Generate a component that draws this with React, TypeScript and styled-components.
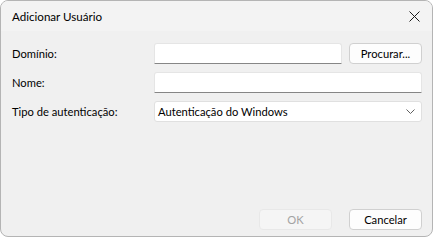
import styled, { createGlobalStyle } from 'styled-components'

const GlobalStyle = createGlobalStyle`
  * {
    box-sizing: border-box;
  }
  body {
    margin: 0;
    background: #ffffff;
    font-family: Lato, 'Noto Sans', sans-serif;
    font-size: 11.2px;
    color: #000000;
  }
`

const Window = styled.div`
  width: 433px;
  height: 237px;
  display: flex;
  flex-direction: column;
  background: #f0f0f0;
  border: 1px solid #b4b4b4;
  border-radius: 8px;
  overflow: hidden;
`

const TitleBar = styled.div`
  height: 30px;
  display: flex;
  align-items: center;
  justify-content: space-between;
  padding: 1px 9px 0 11px;
  background: #f3f3f3;
`

const Title = styled.span`
  font-size: 11.6px;
  color: #000000;
`

const CloseButton = styled.button`
  width: 18px;
  height: 18px;
  padding: 0;
  border: none;
  background: transparent;
  display: flex;
  align-items: center;
  justify-content: center;
`

const Content = styled.div`
  flex: 1;
  display: flex;
  flex-direction: column;
  padding: 12px 10px 6px 11px;
`

const Form = styled.div`
  display: grid;
  grid-template-columns: 135px 188px 73px;
  grid-auto-rows: 21px;
  column-gap: 7px;
  row-gap: 8px;
`

const Label = styled.label`
  display: flex;
  align-items: center;
  height: 21px;
  color: #000000;
`

const TextInput = styled.input<{ $span?: number }>`
  grid-column: span ${(p) => p.$span ?? 1};
  height: 21px;
  margin: 0;
  padding: 0 4px;
  font: inherit;
  background: #ffffff;
  border: 1px solid #e5e5e5;
  border-bottom: 1px solid #868686;
  border-radius: 3px 3px 0 0;
  outline: none;
`

const Select = styled.div`
  grid-column: span 2;
  height: 21px;
  display: flex;
  align-items: center;
  justify-content: space-between;
  padding: 0 6px 0 3px;
  background: #ffffff;
  border: 1px solid #e0e0e0;
  border-radius: 3px;
  color: #000000;
`

const Button = styled.button<{ $disabled?: boolean }>`
  width: 73px;
  height: 21px;
  margin: 0;
  padding: 0;
  font: inherit;
  color: ${(p) => (p.$disabled ? '#a3a3a3' : '#000000')};
  background: ${(p) => (p.$disabled ? '#f5f5f5' : '#fdfdfd')};
  border: 1px solid ${(p) => (p.$disabled ? '#e8e8e8' : '#d0d0d0')};
  border-radius: 4px;
`

const Footer = styled.div`
  margin-top: auto;
  display: flex;
  justify-content: flex-end;
  gap: 17px;
`

export default function App() {
  return (
    <>
      <GlobalStyle />
      <Window>
        <TitleBar>
          <Title>Adicionar Usuário</Title>
          <CloseButton aria-label="Fechar">
            <svg width="11" height="11" viewBox="0 0 11 11">
              <path d="M0.5 0.5 L10.5 10.5 M10.5 0.5 L0.5 10.5" stroke="#1b1b1b" strokeWidth="1" />
            </svg>
          </CloseButton>
        </TitleBar>
        <Content>
          <Form>
            <Label>Domínio:</Label>
            <TextInput />
            <Button>Procurar...</Button>

            <Label>Nome:</Label>
            <TextInput $span={2} />

            <Label>Tipo de autenticação:</Label>
            <Select>
              <span>Autenticação do Windows</span>
              <svg width="9" height="5" viewBox="0 0 9 5">
                <path d="M0.5 0.5 L4.5 4.5 L8.5 0.5" stroke="#606060" strokeWidth="1" fill="none" />
              </svg>
            </Select>
          </Form>
          <Footer>
            <Button $disabled>OK</Button>
            <Button>Cancelar</Button>
          </Footer>
        </Content>
      </Window>
    </>
  )
}
